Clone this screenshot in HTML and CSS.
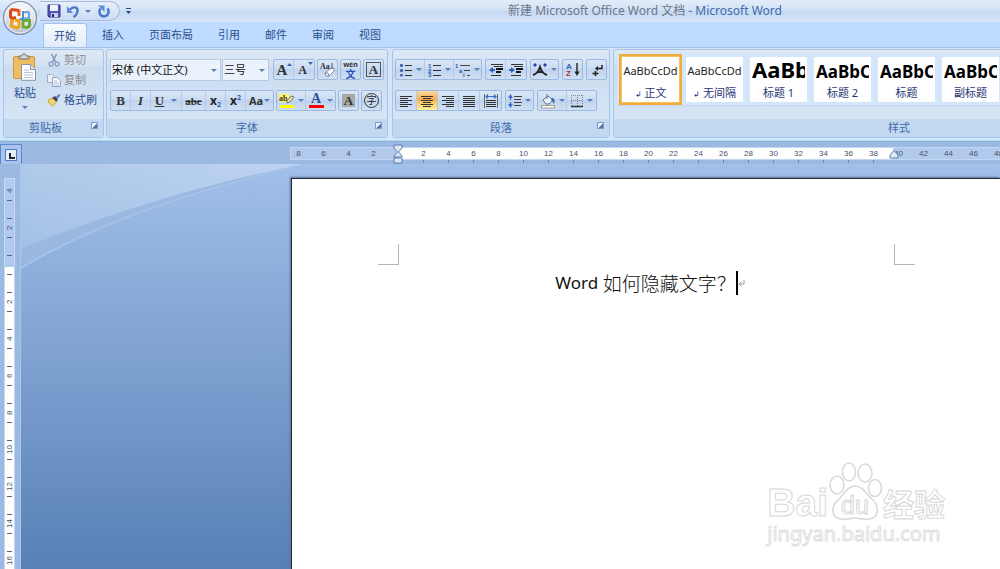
FILE: index.html
```html
<!DOCTYPE html>
<html lang="zh-CN">
<head>
<meta charset="utf-8">
<title>新建 Microsoft Office Word 文档 - Microsoft Word</title>
<link rel="stylesheet" href="styles.css">
</head>
<body>
<header class="titlebar">
  <button class="orb" aria-label="Office 按钮">
    <svg viewBox="0 0 36 36" width="36" height="36">
      <defs>
        <radialGradient id="orbFill" cx="50%" cy="35%" r="65%"><stop offset="0" stop-color="#fff"/><stop offset=".55" stop-color="#e9ecf3"/><stop offset="1" stop-color="#a9b3c6"/></radialGradient>
      </defs>
      <circle cx="18" cy="18" r="16.5" fill="url(#orbFill)" stroke="#7f8da8" stroke-width="1.2"/>
      <circle cx="18" cy="18" r="15" fill="none" stroke="#fff" stroke-opacity=".8"/>
      <g fill="none" stroke-width="3">
        <path d="M17 10.500 L10 9.500 L8.500 11 V17 L10 18.500 L14 17.500" stroke="#d9481c"/>
        <path d="M17 9.500 V16" stroke="#e8622a"/>
        <path d="M20 12.500 L26 12 L27 13 V18 L22 18.500" stroke="#6ea6dc" stroke-width="2.200"/>
        <path d="M12 21 L9.500 21 V26 L15 28 L17 26.500 V20.500 H13" stroke="#f0a21c" />
        <path d="M21 20.500 H27.500 V26 L25.500 27.500 L21 27 Z" stroke="#6aab3c"/>
        <path d="M21 11 V18 M18 19 H22" stroke="#4d8fd0" stroke-width="2"/>
      </g>
    </svg>
  </button>
  <div class="quick">
    <button class="quick-btn" aria-label="保存"><svg viewBox="0 0 14 14" width="14" height="14"><path d="M1 1h12v12H2l-1-1z" fill="#5557b5" stroke="#33358c"/><path d="M3 1h8v6H3z" fill="#f1f4ff"/><path d="M4 9h7v4H4z" fill="#c9cfee"/><path d="M5 10h2v3H5z" fill="#26286b"/></svg></button>
    <button class="quick-btn" aria-label="撤消"><svg viewBox="0 0 14 14" width="14" height="14"><path d="M4 5.500C7 2 12 3 11.500 7c-.3 3-2 5-4 6" fill="none" stroke="#4a78cc" stroke-width="2.400"/><path d="M1 2v7h6z" fill="#5f8bdb"/></svg></button>
    <span class="caret"></span>
    <button class="quick-btn redo" aria-label="恢复"><svg viewBox="0 0 14 14" width="14" height="14"><path d="M10.500 4.500C13.200 8 10.500 12.300 7 12.300 3 12.300 1 7.800 3.600 4.600" fill="none" stroke="#4a78cc" stroke-width="2.400"/><path d="M1 1.500h6.500V8z" fill="#5f8bdb"/></svg></button>
  </div>
  <button class="quick-more" aria-label="自定义快速访问工具栏"><svg viewBox="0 0 7 7" width="7" height="7"><path d="M1 .5h5" stroke="#2f4a80"/><path d="M1 3h5L3.500 6z" fill="#2f4a80"/></svg></button>
  <h1 class="title"><span class="doc-name">新建 Microsoft Office Word 文档</span> - Microsoft Word</h1>
</header>

<nav class="tabs">
  <button class="tab active">开始</button>
  <button class="tab">插入</button>
  <button class="tab">页面布局</button>
  <button class="tab">引用</button>
  <button class="tab">邮件</button>
  <button class="tab">审阅</button>
  <button class="tab">视图</button>
</nav>

<div class="ribbon">
  <section class="group clipboard">
    <div class="group-body">
      <button class="paste">
        <svg viewBox="0 0 24 28" width="24" height="28"><rect x=".5" y="3.500" width="21" height="22" rx="1.500" fill="#f0bd5f" stroke="#c99a45"/><path d="M6 3h3c0-3 4-3 4 0h3v3H6z" fill="#d9d9d9" stroke="#6e6e6e"/><path d="M8.500 11.500h9l5 5v10.800h-14z" fill="#fbfcff" stroke="#8793a8"/><path d="M17.500 11.500v5h5" fill="#dfe5f0" stroke="#8793a8"/><path d="M11 17h5M11 19.500h9M11 22h9M11 24.500h9" stroke="#b9c3d6"/></svg>
        <span>粘贴</span>
        <span class="caret"></span>
      </button>
      <div class="clip-list">
        <button class="clip-item off"><svg viewBox="0 0 14 14" width="14" height="14"><path d="M4.500 1l4 8M9.500 1l-4 8" stroke="#8396b6" stroke-width="1.500"/><circle cx="4" cy="11" r="2" fill="none" stroke="#8ea2c2" stroke-width="1.400"/><circle cx="10" cy="11" r="2" fill="none" stroke="#8ea2c2" stroke-width="1.400"/></svg>剪切</button>
        <button class="clip-item off"><svg viewBox="0 0 14 14" width="14" height="14"><path d="M.5 1.500h5l2 2v6h-7z" fill="#e9eef7" stroke="#a0aec6"/><path d="M5.500 4.500h5l3 3v6h-8z" fill="#f2f5fa" stroke="#94a4c0"/><path d="M7 8h3M7 10h5M7 12h5" stroke="#b5c1d6"/></svg>复制</button>
        <button class="clip-item"><svg viewBox="0 0 14 14" width="14" height="14"><path d="M1 7l5-2 4 3-4 5c-2-.5-4-2-5-6z" fill="#f1d768" stroke="#b99b35" stroke-width=".8"/><path d="M5 5l3-2 3 3-1.500 3z" fill="#4a4a58"/><path d="M9 4l3-3 1.500 1.500-3 3z" fill="#5a78c8"/></svg>格式刷</button>
      </div>
    </div>
    <footer class="group-label">剪贴板<button class="launcher" aria-label="剪贴板选项"></button></footer>
  </section>

  <section class="group font">
    <div class="group-body rows">
      <div class="row">
        <div class="combos">
          <label class="combo family"><select aria-label="字体"><option>宋体 (中文正文)</option></select><span class="caret"></span></label>
          <label class="combo size"><select aria-label="字号"><option>三号</option></select><span class="caret"></span></label>
        </div>
        <div class="set">
          <button class="w20 serif large">A<svg class="mark" viewBox="0 0 5 4" width="5" height="4"><path d="M0 4L2.500 1 5 4z" fill="#3b62a8"/></svg></button>
          <button class="w20 serif small">A<svg class="mark" viewBox="0 0 5 4" width="5" height="4"><path d="M0 0h5L2.500 3z" fill="#3b62a8"/></svg></button>
        </div>
        <div class="set"><button class="w20" aria-label="清除格式"><svg viewBox="0 0 16 16" width="16" height="16"><text x="0" y="7" class="glyph-s">Aa</text><path d="M5 11l5-4 4-1v3l-5 5H6z" fill="#fff" stroke="#7b86a5"/><path d="M5 11l3 0 1 3" fill="none" stroke="#7b86a5"/><path d="M12 1v6" stroke="#555"/></svg></button></div>
        <div class="set"><button class="w20 pinyin"><span>wén</span><b>文</b></button></div>
        <div class="set"><button class="w20 serif boxed"><span>A</span></button></div>
      </div>
      <div class="row">
        <div class="set">
          <button class="w20 serif">B</button>
          <button class="w20 serif italic">I</button>
          <button class="w32 serif underline"><span>U</span><i class="caret"></i></button>
          <button class="w23 strike">abc</button>
          <button class="w20 sub-sup">x<sub>2</sub></button>
          <button class="w20 sub-sup">x<sup>2</sup></button>
          <button class="w27 case">Aa<i class="caret"></i></button>
        </div>
        <div class="set">
          <button class="w29" aria-label="突出显示"><svg viewBox="0 0 16 16" width="16" height="16"><rect x="0" y="1" width="10" height="8" fill="#fff36a"/><text x="0" y="8" class="glyph-s">ab</text><path d="M8 8l4-5 3 1-4 5-3 1z" fill="#e8e4c0" stroke="#665b35" stroke-width=".8"/><rect x="1" y="12" width="14" height="3" fill="#ff0"/></svg><i class="caret"></i></button>
          <button class="w29 color"><span>A</span><i class="caret"></i></button>
        </div>
        <div class="set"><button class="w20 serif shade"><span>A</span></button></div>
        <div class="set"><button class="w20 ring"><span>字</span></button></div>
      </div>
    </div>
    <footer class="group-label">字体<button class="launcher" aria-label="字体选项"></button></footer>
  </section>

  <section class="group para">
    <div class="group-body rows">
      <div class="row">
        <div class="set">
          <button class="w29" aria-label="项目符号"><svg viewBox="0 0 14 14" width="14" height="14"><g fill="#3f66b0"><rect x="1" y="1" width="3" height="3" rx="1"/><rect x="1" y="6" width="3" height="3" rx="1"/><rect x="1" y="11" width="3" height="2.500" rx="1"/></g><path d="M6 2.500h7M6 7.500h7M6 12.500h7" stroke="#333"/></svg><i class="caret"></i></button>
          <button class="w29" aria-label="编号"><svg viewBox="0 0 14 14" width="14" height="14"><text x="0" y="4.500" class="glyph-n">1</text><text x="0" y="9.500" class="glyph-n">2</text><text x="0" y="14" class="glyph-n">3</text><path d="M5 2.500h8M5 7.500h8M5 12.500h8" stroke="#333"/></svg><i class="caret"></i></button>
          <button class="w27" aria-label="多级列表"><svg viewBox="0 0 16 14" width="16" height="14"><text x="0" y="4.500" class="glyph-n">1</text><text x="4" y="9.500" class="glyph-n">a</text><text x="8" y="14" class="glyph-n">i</text><path d="M5 2.500h10M9 7.500h6M12 12.500h3" stroke="#444"/></svg><i class="caret"></i></button>
        </div>
        <div class="set">
          <button class="w20" aria-label="减少缩进"><svg viewBox="0 0 14 14" width="14" height="14"><path d="M0 7l4-3v6z" fill="#2f62c0"/><path d="M3 7h3" stroke="#2f62c0" stroke-width="2"/><path d="M2 1.500h12M2 12.500h10M5 3.500h9" stroke="#333"/><path d="M7 6h7M7 9h5" stroke="#111" stroke-width="2"/></svg></button>
          <button class="w20" aria-label="增加缩进"><svg viewBox="0 0 14 14" width="14" height="14"><path d="M6 7L2 4v6z" fill="#2f62c0"/><path d="M0 7h3" stroke="#2f62c0" stroke-width="2"/><path d="M2 1.500h12M2 12.500h10M5 3.500h9" stroke="#333"/><path d="M7 6h7M7 9h5" stroke="#111" stroke-width="2"/></svg></button>
        </div>
        <div class="set"><button class="w27" aria-label="中文版式"><svg viewBox="0 0 16 14" width="16" height="14"><path d="M1 12c4-1 6-5 7-8 1 3 3 7 7 8M5 9h6" fill="none" stroke="#222" stroke-width="2"/><path d="M3 0l2 2-2 2-2-2zM13 0l2 2-2 2-2-2z" fill="#2c3fb8"/></svg><i class="caret"></i></button></div>
        <div class="set"><button class="w20" aria-label="排序"><svg viewBox="0 0 14 15" width="14" height="15"><text x="0" y="7" class="sort a">A</text><text x="0" y="14" class="sort z">Z</text><path d="M11 1v11" stroke="#222" stroke-width="1.400"/><path d="M8.500 9.500h5L11 14z" fill="#222"/></svg></button></div>
        <div class="set"><button class="w20" aria-label="显示编辑标记"><svg viewBox="0 0 14 14" width="14" height="14"><path d="M12 2v3.500H7" fill="none" stroke="#222" stroke-width="1.500"/><path d="M8 3v5L5 5.500z" fill="#222"/><path d="M2.500 10.500h6M5.500 8v5" stroke="#222" stroke-width="1.600"/></svg></button></div>
      </div>
      <div class="row">
        <div class="set">
          <button class="w21" aria-label="左对齐"><svg viewBox="0 0 14 12" width="14" height="12"><path d="M1 1.500h12M1 3.500h8M1 5.500h12M1 7.500h8M1 9.500h12M1 11.500h8" stroke="#333"/></svg></button>
          <button class="w21 on" aria-label="居中"><svg viewBox="0 0 14 12" width="14" height="12"><path d="M1 1.500h12M3 3.500h8M1 5.500h12M3 7.500h8M1 9.500h12M3 11.500h8" stroke="#333"/></svg></button>
          <button class="w21" aria-label="右对齐"><svg viewBox="0 0 14 12" width="14" height="12"><path d="M1 1.500h12M5 3.500h8M1 5.500h12M5 7.500h8M1 9.500h12M5 11.500h8" stroke="#333"/></svg></button>
          <button class="w21" aria-label="两端对齐"><svg viewBox="0 0 14 12" width="14" height="12"><path d="M1 1.500h12M1 3.500h12M1 5.500h12M1 7.500h12M1 9.500h12M1 11.500h12" stroke="#333"/></svg></button>
          <button class="w21" aria-label="分散对齐"><svg viewBox="0 0 14 14" width="14" height="14"><path d="M.5 0v14M13.500 0v14" stroke="#666"/><path d="M2 6.500h10M2 8.500h10M2 10.500h10M2 12.500h10" stroke="#333"/><path d="M3 2.500h8" stroke="#3b6fc8"/><path d="M1 2.500L4 0v5zM13 2.500L10 0v5z" fill="#3b6fc8"/></svg></button>
        </div>
        <div class="set"><button class="w27" aria-label="行距"><svg viewBox="0 0 14 14" width="14" height="14"><path d="M2.500 2v4M2.500 8v4" stroke="#3b6fc8" stroke-width="1.400"/><path d="M0 4L2.500 0 5 4zM0 10l2.500 4L5 10z" fill="#3b6fc8"/><path d="M6 2.500h8M6 5.500h7M6 8.500h8M6 11.500h7" stroke="#444"/></svg><i class="caret"></i></button></div>
        <div class="set">
          <button class="w29" aria-label="底纹"><svg viewBox="0 0 16 16" width="16" height="16"><path d="M3 7l5-4 5 4-4 4H6z" fill="#eef2fa" stroke="#65728e"/><path d="M7 1v5" stroke="#65728e"/><path d="M12 5c3 0 3 3 2 6-1-2-2-3-3-4z" fill="#3763b4"/><rect x="1.500" y="12.500" width="13" height="2.500" fill="#fff" stroke="#a79c88"/></svg><i class="caret"></i></button>
          <button class="w29" aria-label="边框"><svg viewBox="0 0 14 14" width="14" height="14"><path d="M1.500 1v11M7.500 1v11M12.500 1v11M1 1.500h12M1 6.500h12" stroke="#7d8798" stroke-dasharray="1 1"/><path d="M1 12.500h12" stroke="#333" stroke-width="1.500"/></svg><i class="caret"></i></button>
        </div>
      </div>
    </div>
    <footer class="group-label">段落<button class="launcher" aria-label="段落选项"></button></footer>
  </section>

  <section class="group styles">
    <div class="group-body">
      <div class="gallery">
        <button class="style selected"><span class="sample">AaBbCcDd</span><span class="name"><small>↲</small> 正文</span></button>
        <button class="style"><span class="sample">AaBbCcDd</span><span class="name"><small>↲</small> 无间隔</span></button>
        <button class="style"><span class="sample h1">AaBb</span><span class="name">标题 1</span></button>
        <button class="style"><span class="sample h2">AaBbC</span><span class="name">标题 2</span></button>
        <button class="style"><span class="sample h2">AaBbC</span><span class="name">标题</span></button>
        <button class="style"><span class="sample h2">AaBbC</span><span class="name">副标题</span></button>
      </div>
    </div>
    <footer class="group-label">样式</footer>
  </section>
</div>

<div class="ruler-row">
  <button class="tab-stop" aria-label="制表符"><svg viewBox="0 0 12 12" width="12" height="12"><rect x=".5" y=".5" width="11" height="11" fill="#e6eefa" stroke="#4f7bcb"/><path d="M5 4v5h5" fill="none" stroke="#223" stroke-width="2"/></svg></button>
  <div class="ruler">
    <div class="seg before"><span>8</span><span>6</span><span>4</span><span>2</span></div>
    <div class="seg body"><svg class="indent" viewBox="0 0 10 20" width="10" height="20"><path d="M1 1h8v3L5.500 8 9 12v1H1v-1L4.500 8 1 4z" fill="#dce7f6" stroke="#5d7fb5"/><rect x="1" y="14" width="8" height="5" fill="#dce7f6" stroke="#5d7fb5"/></svg><span>2</span><span>4</span><span>6</span><span>8</span><span>10</span><span>12</span><span>14</span><span>16</span><span>18</span><span>20</span><span>22</span><span>24</span><span>26</span><span>28</span><span>30</span><span>32</span><span>34</span><span>36</span><span>38</span></div>
    <div class="seg after"><svg class="indent" viewBox="0 0 10 10" width="10" height="10"><path d="M1 9V6l4-4.500L9 6v3z" fill="#dce7f6" stroke="#5d7fb5"/></svg><span>40</span><span>42</span><span>44</span><span>46</span><span>48</span></div>
  </div>
</div>

<main class="work">
  <div class="side">
    <div class="vruler">
      <div class="v first"><b>4</b></div><div class="v"><b>2</b></div><div class="v"><b></b></div><div class="v"><b>2</b></div><div class="v"><b>4</b></div><div class="v"><b>6</b></div><div class="v"><b>8</b></div><div class="v"><b>10</b></div><div class="v"><b>12</b></div><div class="v"><b>14</b></div><div class="v"><b>16</b></div>
    </div>
  </div>
  <div class="canvas">
    <svg class="swoosh" viewBox="0 0 290 110" width="290" height="110">
      <defs><linearGradient id="sweep" x1="0" y1="1" x2="1" y2="0"><stop offset="0" stop-color="#a3c0e4"/><stop offset="1" stop-color="#bdd3f2"/></linearGradient></defs>
      <path d="M0 0H282C170 26 80 62 0 104z" fill="#9bb9e0"/>
      <path d="M0 104C80 56 180 25 282 0" fill="none" stroke="#a9c4e8" stroke-width="1.500"/>
      <path d="M0 0H282C180 21 90 48 0 85z" fill="url(#sweep)"/>
    </svg>
    <article class="page">
      <div class="corner left"></div>
      <p class="line" contenteditable="true"><span class="latin">Word </span>如何隐藏文字？<span class="cursor"></span><svg class="para-mark" viewBox="0 0 7 9" width="7" height="9"><path d="M6 1v4H1M3.500 3L1 5l2.500 2.500" fill="none" stroke="#999"/></svg></p>
      <div class="corner right"></div>
      <div class="watermark">
        <div class="wm-top">
          <span class="wm-bai">Bai</span>
          <span class="wm-paw"><svg viewBox="0 0 54 60" width="54" height="60"><g fill="#fff" stroke="#dadada" stroke-width="1.600"><ellipse cx="9" cy="24" rx="7" ry="9"/><ellipse cx="21" cy="11" rx="6.500" ry="9"/><ellipse cx="37" cy="12" rx="7" ry="9"/><ellipse cx="47" cy="27" rx="6.500" ry="8.500"/><path d="M27 25c8 0 11 8 17 13 7 6 8 19-3 20-6 1-9-1-14-1s-8 2-14 1C3 57 3 46 9 40c6-5 10-15 18-15z"/></g></svg><span class="wm-du">du</span></span>
          <span class="wm-cn">经验</span>
        </div>
        <div class="wm-url">jingyan.baidu.com</div>
      </div>
    </article>
  </div>
</main>
</body>
</html>
```

FILE: styles.css
```css
* { box-sizing: border-box; }
html, body { height: 100%; }
body {
  margin: 0;
  display: flex;
  flex-direction: column;
  overflow: hidden;
  background: #bfdbff;
  color: #2a4f8f;
  font: 11px/16px "Noto Sans", "Noto Sans CJK SC", sans-serif;
}
button, select {
  font: inherit;
  color: inherit;
  background: none;
  border: 0;
  padding: 0;
  margin: 0;
}
svg { display: block; flex: none; }
.caret {
  flex: none;
  width: 5px;
  border: solid transparent;
  border-width: 3px 3px 0;
  border-top-color: #5a80bc;
}

/* title bar */
.titlebar {
  position: relative;
  flex: none;
  display: flex;
  align-items: center;
  height: 22px;
  padding-left: 40px;
  background: linear-gradient(#e2ecf9, #d3e2f6 45%, #c5d9f2 50%, #d5e5f9);
}
.orb { position: absolute; left: 2px; top: 0; z-index: 2; }
.quick {
  display: flex;
  align-items: center;
  height: 20px;
  width: 80px;
  padding-left: 7px;
  gap: 5px;
  border: 1px solid #a3bce0;
  border-left: 0;
  border-radius: 0 10px 10px 0;
  background: linear-gradient(#e6effb, #cbdcf3);
}
.quick .caret { margin-right: 1px; }
.quick-more { margin-left: 5px; }
.title {
  position: absolute;
  left: 290px;
  right: 0;
  margin: 0;
  text-align: center;
  font-size: 12px;
  font-weight: 400;
  color: #3e6aaa;
}
.doc-name { color: #6b7688; }

/* tabs */
.tabs {
  flex: none;
  display: flex;
  gap: 5px;
  height: 25px;
  padding: 1px 0 0 43px;
  background: #bfdbff;
}
.tab { padding: 0 10px; }
.tab.active {
  border: 1px solid #a5c3ea;
  border-bottom: 0;
  border-radius: 3px 3px 0 0;
  padding: 0 10px;
  background: linear-gradient(#f7fbff, #e0ebf8);
}

/* ribbon */
.ribbon {
  flex: none;
  display: flex;
  gap: 2px;
  height: 94px;
  padding: 1px 3px 2px;
  overflow: hidden;
  background: #d3e5fa;
  border-top: 1px solid #a5c3ea;
  border-bottom: 1px solid #a9e0ee;
}
.group {
  flex: none;
  display: flex;
  flex-direction: column;
  border: 1px solid #a9c5e6;
  border-radius: 3px;
  background: linear-gradient(#dfe9f5, #d2e1f2 18%, #cbdcf0 20%, #d9e8f6);
}
.group-body { flex: 1; display: flex; }
.group-label {
  position: relative;
  height: 18px;
  line-height: 17px;
  text-align: center;
  color: #3e6aaa;
  background: #c1d8f0;
}
.launcher {
  position: absolute;
  right: 5px;
  top: 3px;
  width: 7px;
  height: 7px;
  border: 1px solid #7c9cc9;
  background: linear-gradient(135deg, #e6f0fb 55%, #4f75b0 55%);
}
.clipboard { width: 101px; }
.clipboard .group-label { padding-right: 16px; }
.paste {
  display: flex;
  flex-direction: column;
  align-items: center;
  width: 42px;
  padding-top: 3px;
}
.paste .caret { margin-top: 5px; }
.paste span:first-of-type { margin-top: 4px; }
.clip-list { display: flex; flex-direction: column; gap: 4px; padding-top: 2px; }
.clip-item { display: flex; align-items: center; gap: 3px; height: 16px; white-space: nowrap; margin-left: 1px; }
.off { color: #8d8d8d; }

.font { width: 282px; }
.font .row { gap: 2px; }
.para { width: 218px; margin: 0 1px 0 2px; }
.styles { width: 572px; }
.rows { flex-direction: column; gap: 11px; padding: 9px 2px 0 3px; }
.para .rows { padding-left: 2px; }
.row { display: flex; align-items: flex-start; gap: 3px; height: 20px; }
.combos { display: flex; gap: 1px; margin-right: 2px; }
.combo {
  position: relative;
  height: 22px;
  border: 1px solid #b5cce8;
  background: #eaf2fb;
  color: #111;
}
.combo select { width: 100%; height: 20px; padding-left: 1px; appearance: none; }
.combo .caret { position: absolute; right: 3px; top: 9px; }
.family { width: 111px; }
.size { width: 47px; }
.set {
  display: flex;
  height: 21px;
  border: 1px solid #9bb9e0;
  border-radius: 2px;
  background: linear-gradient(#d9e6f6, #cbdcf2 45%, #bfd3ee 50%, #d0e0f4);
}
.set button {
  display: flex;
  align-items: center;
  justify-content: center;
  gap: 3px;
  position: relative;
  border-right: 1px solid #b4cae8;
}
.set button:last-child { border-right: 0; }
.w20 { width: 20px; }
.w21 { width: 21px; }
.w23 { width: 24px; }
.w27 { width: 27px; }
.w29 { width: 29px; }
.w32 { width: 31px; }
.w20:only-child { width: 19px; }
.serif { font: bold 13px/18px "Liberation Serif", serif; color: #333; }
.serif.large { font-size: 15px; padding-right: 3px; }
.serif.small { font-size: 12px; padding-right: 3px; }
.serif .mark { position: absolute; right: 1px; top: 2px; }
.italic { font-style: italic; }
.underline span { text-decoration: underline; }
.set .underline { gap: 7px; }
.strike { font: bold 11px/18px "Liberation Serif", serif; color: #333; text-decoration: line-through; }
.set .sub-sup { gap: 0; font: bold 12px/14px "Noto Sans", sans-serif; color: #222; }
.sub-sup sub, .sub-sup sup { font-size: 7px; line-height: 7px; color: #2d59ae; }
.sub-sup sub { align-self: flex-end; margin-bottom: 2px; }
.sub-sup sup { align-self: flex-start; margin-top: 3px; }
.case { font: bold 11px/18px "Noto Sans", sans-serif; color: #333; }
.set .case { gap: 1px; }
.color span {
  width: 15px;
  border-bottom: 3px solid #f00;
  font: bold 14px/12px "Liberation Serif", serif;
  color: #2f5597;
}
.shade span { width: 13px; height: 13px; line-height: 13px; background: #a9a9a9; }
.boxed span { width: 15px; height: 15px; line-height: 13px; border: 1px solid #555; }
.ring span { width: 15px; height: 15px; border: 1px solid #333; border-radius: 50%; font-size: 10px; line-height: 12px; color: #222; }
.set .pinyin { flex-direction: column; gap: 0; }
.pinyin span { font-size: 7px; font-weight: 700; line-height: 8px; color: #333; }
.pinyin b { font-size: 10px; line-height: 10px; color: #2c4fc0; }
.glyph-s { font: bold 8px "Liberation Serif", serif; fill: #333; }
.glyph-n { font: bold 6px "Liberation Sans", sans-serif; fill: #2f56a6; }
.sort { font: bold 8px "Liberation Sans", sans-serif; }
.sort.a { fill: #2f62c0; }
.sort.z { fill: #b03030; }
.set .on { background: linear-gradient(#fbd9a2, #f9a848 48%, #fdc05a 52%, #fff09a); }

.gallery {
  flex: 1;
  display: flex;
  gap: 7px;
  height: 53px;
  margin: 3px 0 0 3px;
  padding: 4px 0 0 5px;
  background: #d4e6f9;
  border-bottom: 1px solid #c0d6f0;
}
.style {
  flex: none;
  display: flex;
  flex-direction: column;
  width: 57px;
  height: 45px;
  overflow: hidden;
  background: #fff;
  color: #1f3474;
}
.style.selected { box-shadow: 0 0 0 1px #f5c25c, 0 0 0 3px #f0ac3c; }
.sample {
  height: 28px;
  margin: 0 2px;
  line-height: 28px;
  font-size: 11px;
  color: #222;
  white-space: nowrap;
  overflow: hidden;
  text-align: center;
}
.sample:not(.h1):not(.h2) { margin: 0; }
.sample.h1 { font-size: 22px; font-weight: 700; text-align: left; line-height: 24px; color: #000; }
.sample.h2 { font-size: 17px; font-weight: 700; text-align: left; line-height: 29px; color: #000; }
.name { line-height: 16px; text-align: center; }
.name small { font-size: 8px; }

/* horizontal ruler */
.ruler-row {
  flex: none;
  display: flex;
  align-items: flex-start;
  height: 23px;
  padding-top: 2px;
  border-top: 1px solid #8fb0da;
  background: #9bb9e1;
}
.tab-stop { display: grid; place-items: center; width: 22px; height: 21px; border: 1px solid #5c87d4; background: #aac4ea; }
.ruler { flex: 1; display: flex; min-width: 0; margin: 4px 0 0 269px; font: 8px/11px "Liberation Sans", sans-serif; color: #45536d; }
.seg { position: relative; display: flex; height: 11px; background: #b1c9ec; box-shadow: 0 0 0 1px #c3d7f2; }
.seg span { flex: none; position: relative; width: 25px; text-align: center; }
.before { width: 107px; justify-content: flex-end; padding-right: 12px; }
.body { width: 496px; padding-left: 13px; background: #fff; }
.body span::after { content: ""; position: absolute; left: 12px; top: 12px; width: 1px; height: 3px; background: #74849e; }
.after { flex: 1; min-width: 0; overflow: visible; }
.after span:first-of-type { margin-left: -8px; }
.indent { position: absolute; left: -5px; top: -4px; z-index: 1; }
.after .indent { top: 1px; }

/* workspace */
.work { flex: 1; min-height: 0; display: flex; overflow: hidden; }
.side { flex: none; width: 21px; padding: 14px 5px 0 4px; background: #9bbae2; border-right: 1px solid #a9c6ea; }
.vruler {
  height: 100%;
  border: solid #c6d9f2;
  border-width: 1px 1px 0;
  background: linear-gradient(#b1c9ec 88px, #fff 88px);
  overflow: hidden;
}
.v { display: flex; flex-direction: column; align-items: center; justify-content: center; height: 37px; }
.v::before, .v::after { content: ""; width: 5px; height: 1px; background: #58657b; }
.v b {
  height: 18px;
  writing-mode: vertical-rl;
  transform: rotate(180deg);
  text-align: center;
  font: 8px/9px "Liberation Sans", sans-serif;
  color: #45536d;
}
.v.first { height: 30px; justify-content: flex-start; padding-top: 3px; }
.v.first::before { display: none; }
.canvas { position: relative; flex: 1; min-width: 0; padding: 14px 0 0 270px; background: linear-gradient(#a1c0ea, #5880b5); }
.swoosh { position: absolute; left: 0; top: 0; }
.page {
  position: relative;
  display: flex;
  align-items: flex-start;
  height: 100%;
  padding: 65px 0 0 86px;
  border: solid #25272e;
  border-width: 1px 0 0 1px;
  background: #fff;
  box-shadow: -1px -1px 2px #5d7698;
}
.corner { flex: none; width: 21px; height: 21px; border: 0 solid #b5b5b5; border-bottom-width: 1px; }
.corner.left { border-right-width: 1px; }
.corner.right { border-left-width: 1px; }
.line {
  flex: none;
  display: flex;
  align-items: center;
  justify-content: center;
  width: 495px;
  margin: 27px 0 0;
  padding-left: 7px;
  white-space: pre;
  outline: 0;
  font: 300 19px/24px "Noto Sans CJK SC", sans-serif;
  color: #111;
}
.latin { font: 17px/24px "Noto Sans", sans-serif; }
.cursor { width: 2px; height: 24px; background: #000; }
.watermark { position: absolute; right: 55px; bottom: 22px; color: #fff; }
.wm-top { display: flex; align-items: flex-end; justify-content: flex-end; height: 60px; -webkit-text-stroke: 1px #d8d8d8; }
.wm-bai { font: bold 39px/37px "Liberation Sans", sans-serif; }
.wm-paw { position: relative; }
.wm-du { position: absolute; left: 13px; bottom: 2px; font: 25px/28px "Liberation Sans", sans-serif; }
.wm-cn { margin: 0 0 2px 1px; font: bold 31px/32px "Noto Sans CJK SC", sans-serif; }
.wm-url { font: 20px/26px "Noto Sans", sans-serif; -webkit-text-stroke: 1px #dedede; }
```
